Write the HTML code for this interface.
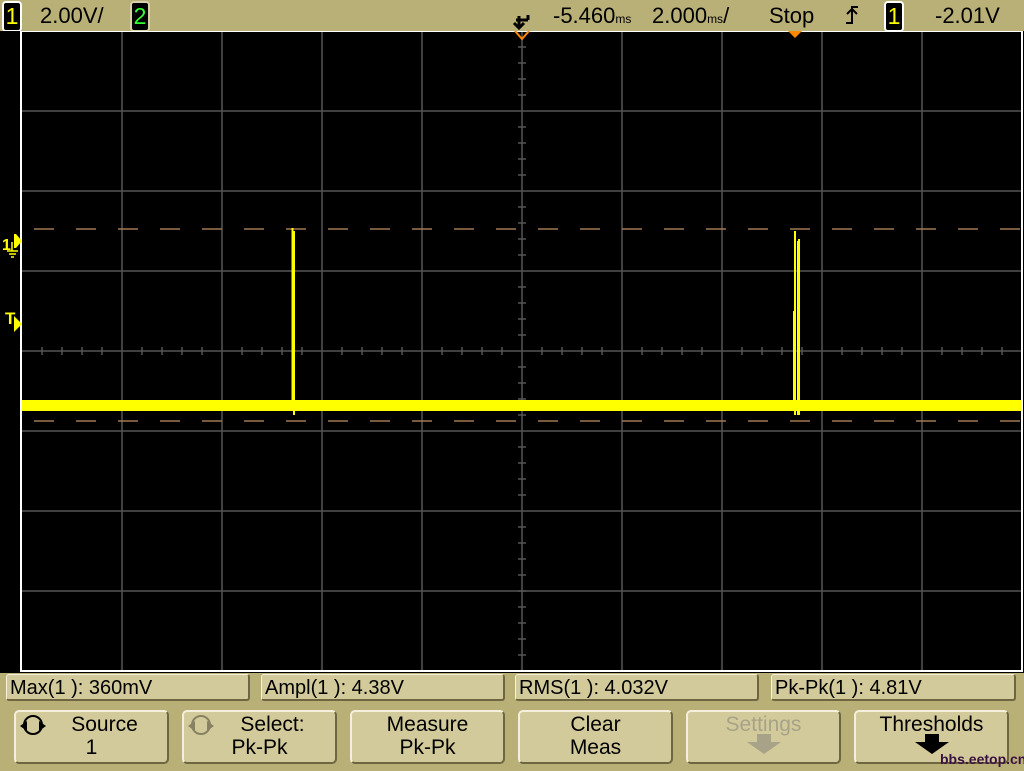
<!DOCTYPE html>
<html><head><style>
body{margin:0;width:1024px;height:768px;background:#b9b077;overflow:hidden;position:relative;font-family:"Liberation Sans",sans-serif}
.t{position:absolute;font-size:22px;color:#000;line-height:24px;white-space:nowrap}
.badge{position:absolute;top:1px;width:16px;height:27px;background:#000;border:2px solid #fff;border-radius:4px;font-size:23px;line-height:27px;text-align:center}
.m{position:absolute;top:674px;height:27px;background:#d2ca9a;border:1px solid #f4f0dc;border-right:2px solid #6e6640;border-bottom:2px solid #6e6640;border-radius:3px;font-size:20px;line-height:27px;padding-left:3px;box-sizing:border-box}
.b{position:absolute;top:710px;height:54px;width:155px;background:#d2ca9a;border:2px solid #f4f0dc;border-right-color:#6e6640;border-bottom-color:#6e6640;border-radius:5px;box-sizing:border-box;text-align:center;font-size:21px;line-height:23px;padding-top:1px}
</style></head><body>
<div class="badge" style="left:2px;color:#ff0">1</div>
<div class="t" style="left:40px;top:4px">2.00V/</div>
<div class="badge" style="left:130px;color:#3f3;border-color:#d8d0a8">2</div>
<svg style="position:absolute;left:512px;top:10px" width="24" height="22"><path d="M4 10h12M16 5v5M7 6v11M2 13l5 5 5-5" stroke="#000" stroke-width="3" fill="none"/></svg>
<div class="t" style="left:553px;top:4px">-5.460<span style="font-size:12px">ms</span></div>
<div class="t" style="left:652px;top:4px">2.000<span style="font-size:12px">ms</span>/</div>
<div class="t" style="left:769px;top:4px">Stop</div>
<svg style="position:absolute;left:844px;top:5px" width="16" height="20"><path d="M2 18h6V2h6M3 9l5-5 5 5" stroke="#000" stroke-width="2" fill="none"/></svg>
<div class="badge" style="left:884px;color:#ff0">1</div>
<div class="t" style="left:935px;top:4px">-2.01V</div>
<svg style="position:absolute;left:0;top:31px" width="1024" height="642">
<rect x="0" y="0" width="1024" height="642" fill="#000"/>
<g stroke="#555" stroke-width="1.5">
<path d="M122 1V640M222 1V640M322 1V640M422 1V640M622 1V640M722 1V640M822 1V640M922 1V640M22 80H1022M22 160H1022M22 240H1022M22 400H1022M22 480H1022M22 560H1022"/>
<path d="M522 1V640M22 320H1022"/>
</g>
<path d="M42 316v8M62 316v8M82 316v8M102 316v8M142 316v8M162 316v8M182 316v8M202 316v8M242 316v8M262 316v8M282 316v8M302 316v8M342 316v8M362 316v8M382 316v8M402 316v8M442 316v8M462 316v8M482 316v8M502 316v8M542 316v8M562 316v8M582 316v8M602 316v8M642 316v8M662 316v8M682 316v8M702 316v8M742 316v8M762 316v8M782 316v8M802 316v8M842 316v8M862 316v8M882 316v8M902 316v8M942 316v8M962 316v8M982 316v8M1002 316v8" stroke="#555" stroke-width="1.5"/>
<path d="M518 16h8M518 32h8M518 48h8M518 64h8M518 96h8M518 112h8M518 128h8M518 144h8M518 176h8M518 192h8M518 208h8M518 224h8M518 256h8M518 272h8M518 288h8M518 304h8M518 336h8M518 352h8M518 368h8M518 384h8M518 416h8M518 432h8M518 448h8M518 464h8M518 496h8M518 512h8M518 528h8M518 544h8M518 560h8M518 576h8M518 592h8M518 608h8M518 624h8" stroke="#555" stroke-width="1.5"/>
<path d="M34 198H1022M34 390H1022" stroke="#a07850" stroke-width="1.5" stroke-dasharray="20 22"/>
<rect x="22" y="369" width="1000" height="11" fill="#ff0"/>
<path d="M292.5 197V380M294 200V384M795 200V384M798 210V384M799 208V384" stroke="#ff0" stroke-width="2"/>
<rect x="793" y="280" width="2" height="100" fill="#ff0"/>
<path d="M21 0V640H1022V0H21" stroke="#fff" stroke-width="2" fill="none"/>
<path d="M515 0l7 8 7-8" stroke="#f80" stroke-width="2" fill="none"/>
<path d="M788 0h14l-7 7z" fill="#f80"/>
</svg>
<div class="t" style="left:2px;top:234px;color:#ff0;font-size:16px;font-weight:bold">1</div>
<svg style="position:absolute;left:4px;top:234px" width="18" height="26"><path d="M10 0h2l6 7-6 7h-2" fill="#ff0"/><path d="M8 8v9M3 17h11M5 20h7M7 23h3" stroke="#ff0" stroke-width="1.5" fill="none"/></svg>
<div class="t" style="left:5px;top:307px;color:#ff0;font-size:17px;font-weight:bold">T</div>
<svg style="position:absolute;left:13px;top:316px" width="10" height="16"><path d="M1 0l8 8-8 8z" fill="#ff0"/></svg>
<div class="m" style="left:6px;width:244px">Max(1 ): 360mV</div>
<div class="m" style="left:261px;width:244px">Ampl(1 ): 4.38V</div>
<div class="m" style="left:515px;width:244px">RMS(1 ): 4.032V</div>
<div class="m" style="left:771px;width:245px">Pk-Pk(1 ): 4.81V</div>
<div class="b" style="left:14px"><span style="padding-left:26px">Source</span><br>1</div>
<svg style="position:absolute;left:18px;top:713px" width="30" height="24"><circle cx="15" cy="12" r="9" stroke="#000" stroke-width="2" fill="none"/><path d="M2 13l7-5v10zM28 13l-7-5v10z" fill="#000"/></svg>
<div class="b" style="left:182px"><span style="padding-left:26px">Select:</span><br>Pk-Pk</div>
<svg style="position:absolute;left:186px;top:713px" width="30" height="24" opacity=".35"><circle cx="15" cy="12" r="9" stroke="#000" stroke-width="2" fill="none"/><path d="M2 13l7-5v10zM28 13l-7-5v10z" fill="#000"/></svg>
<div class="b" style="left:350px">Measure<br>Pk-Pk</div>
<div class="b" style="left:518px">Clear<br>Meas</div>
<div class="b" style="left:686px;color:#a8a388">Settings<br><svg width="50" height="20" style="margin-top:-2px"><path d="M18 0h14v8h10L25 20 8 8h10z" fill="#a8a388"/></svg></div>
<div class="b" style="left:854px">Thresholds<br><svg width="50" height="20" style="margin-top:-2px"><path d="M18 0h14v8h10L25 20 8 8h10z" fill="#000"/></svg></div>
<div class="t" style="left:940px;top:747px;color:#3a1040;font-size:14px;font-weight:bold">bbs.eetop.cn</div>
</body></html>
